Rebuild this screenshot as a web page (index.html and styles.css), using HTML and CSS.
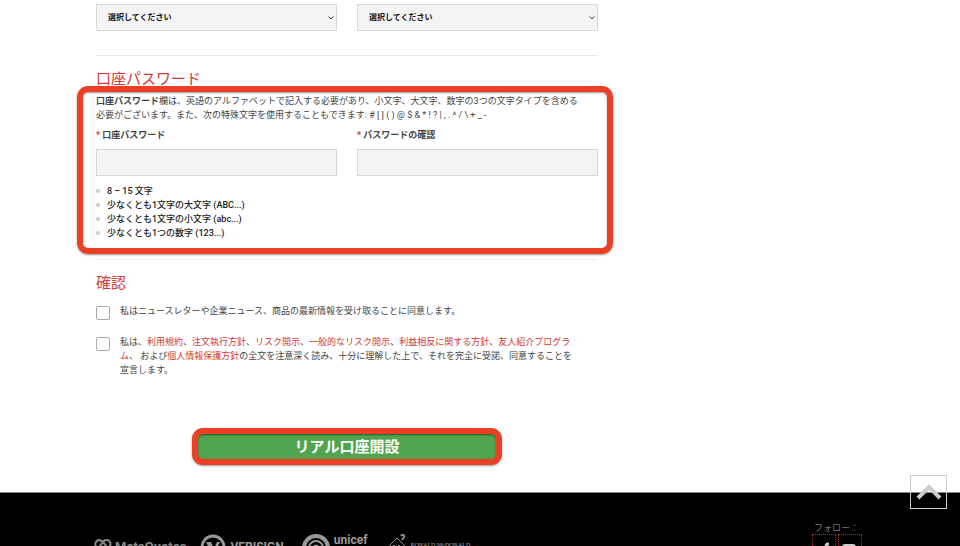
FILE: index.html
```html
<!DOCTYPE html>
<html lang="ja">
<head>
    <meta charset="UTF-8">
    <meta name="viewport" content="width=device-width, initial-scale=1.0">
    <title>リアル口座開設</title>
    <link rel="stylesheet" href="styles.css">
</head>
<body>

    <main class="container">
        <form class="account-form">
            <div class="row">
                <select class="field" aria-label="選択1">
                    <option>選択してください</option>
                </select>
                <select class="field" aria-label="選択2">
                    <option>選択してください</option>
                </select>
            </div>

            <!-- Account password -->
            <section class="section">
                <h2>口座パスワード</h2>
                <div class="password">
                    <p><strong>口座パスワード</strong>欄は、英語のアルファベットで記入する必要があり、小文字、大文字、数字の3つの文字タイプを含める<br>必要がございます。また、次の特殊文字を使用することもできます: # [ ] ( ) @ $ &amp; * ! ? | , . ^ / \ + _ -</p>
                    <div class="row">
                        <div class="group">
                            <label for="password"><span class="required">*</span> 口座パスワード</label>
                            <input class="field" type="password" id="password" name="password" required>
                        </div>
                        <div class="group">
                            <label for="confirm"><span class="required">*</span> パスワードの確認</label>
                            <input class="field" type="password" id="confirm" name="confirm" required>
                        </div>
                    </div>
                    <ul class="rules">
                        <li>8 – 15 文字</li>
                        <li>少なくとも1文字の大文字 (ABC...)</li>
                        <li>少なくとも1文字の小文字 (abc...)</li>
                        <li>少なくとも1つの数字 (123...)</li>
                    </ul>
                </div>
            </section>

            <!-- Confirmation -->
            <section class="section">
                <h2>確認</h2>
                <div class="checks">
                    <div class="check">
                        <input type="checkbox" id="newsletter" name="newsletter">
                        <label for="newsletter">私はニュースレターや企業ニュース、商品の最新情報を受け取ることに同意します。</label>
                    </div>
                    <div class="check">
                        <input type="checkbox" id="terms" name="terms" required>
                        <label for="terms">私は、<a href="#">利用規約</a>、<a href="#">注文執行方針</a>、<a href="#">リスク開示</a>、<a href="#">一般的なリスク開示</a>、<a href="#">利益相反に関する方針</a>、<a href="#">友人紹介プログラ<br>ム</a>、 および<a href="#">個人情報保護方針</a>の全文を注意深く読み、十分に理解した上で、それを完全に受諾、同意することを<br>宣言します。</label>
                    </div>
                </div>
            </section>

            <button class="submit" type="submit">リアル口座開設</button>
        </form>
    </main>

    <footer class="footer">
        <div class="partners">
            <div class="partner metaquotes">
                <svg width="18" height="18" viewBox="0 0 18 18" fill="none" stroke="#888" stroke-width="2">
                    <path d="M2 9C0 5 3 2 5 2c2 0 3 1 4 2l4 5M5 9l5-6c2-2 5-1 6 1 1 2 0 4-1 5l-6 7-7-7"/>
                </svg>
                <span>MetaQuotes</span>
            </div>
            <div class="partner verisign">
                <svg width="26" height="26" viewBox="0 0 26 26">
                    <circle cx="13" cy="13" r="11" fill="none" stroke="#999" stroke-width="3"/>
                    <path d="M6 8h5l3 7 3-7h3l-6 12h-2z" fill="#999"/>
                </svg>
                <span>VERISIGN</span>
            </div>
            <div class="partner unicef">
                <svg width="28" height="28" viewBox="0 0 28 28" fill="none" stroke="#999">
                    <circle cx="14" cy="14" r="12" stroke-width="4"/>
                    <circle cx="14" cy="14" r="7" stroke-width="2"/>
                    <circle cx="14" cy="14" r="3" fill="#999"/>
                </svg>
                <span>unicef<br>China</span>
            </div>
            <div class="partner ronald">
                <svg width="20" height="24" viewBox="0 0 20 24" fill="none" stroke="#888">
                    <path d="M1 13l9-9 9 9M3 12v10h14V12"/>
                    <path d="M14 2c1-2 4-1 3 1l-2 3M7 11v3M12 11v3" stroke-width="2"/>
                </svg>
                <span>RONALD McDONALD</span>
            </div>
        </div>
        <div class="follow">
            <span>フォロー：</span>
            <div class="social">
                <a href="#" aria-label="Facebook">
                    <svg width="20" height="20" viewBox="0 0 20 20">
                        <path d="M15 9h-1c-2 0-2 1-2 3v8M9 14h6" fill="none" stroke="#ccc" stroke-width="3"/>
                    </svg>
                </a>
                <a href="#" aria-label="YouTube">
                    <svg width="20" height="20" viewBox="0 0 20 20">
                        <path d="M5 9h8q3 0 3 3v4q0 3-3 3H5q-3 0-3-3v-4q0-3 3-3z" fill="#ccc"/>
                        <path d="M8 12l4 2-4 2z" fill="#000"/>
                    </svg>
                </a>
            </div>
        </div>
    </footer>

    <a class="to-top" href="#" aria-label="Top">
        <svg width="26" height="16" viewBox="0 0 26 16">
            <path d="M2 14L13 3l11 11" fill="none" stroke="#ccc" stroke-width="4"/>
        </svg>
    </a>

</body>
</html>
```
FILE: styles.css
```css
* {
    box-sizing: border-box;
}
body {
    display: flex;
    flex-direction: column;
    height: 100vh;
    margin: 0;
    overflow: hidden;
    background-color: #fff;
    color: #444;
    font-family: Roboto, "Noto Sans CJK JP", sans-serif;
    font-size: 9px;
    line-height: 14px;
}
.container {
    width: 100%;
    padding: 4px 96px 27px;
}
.account-form {
    max-width: 502px;
}
.row {
    display: grid;
    grid-template-columns: 1fr 1fr;
    gap: 20px;
}
.field {
    display: block;
    width: 100%;
    height: 27px;
    padding: 0 7px;
    border: 1px solid #d8d8d8;
    border-radius: 0;
    background-color: #f4f4f4;
    font-family: inherit;
    font-size: 9px;
}
select.field {
    appearance: none;
    padding: 0 11px;
    background-image: url("data:image/svg+xml,%3Csvg xmlns='http://www.w3.org/2000/svg' width='6' height='4'%3E%3Cpath d='M.5.5L3 3 5.500.5' fill='none' stroke='%23444'/%3E%3C/svg%3E");
    background-position: right 2px center;
    background-repeat: no-repeat;
    color: #111;
    font-size: 8px;
    font-weight: bold;
}
.section {
    margin-top: 24px;
    border-top: 1px solid #e8e8e8;
}
h2 {
    margin: 0;
    padding: 13px 0 5px;
    color: #d13a37;
    font-size: 15px;
    font-weight: normal;
    line-height: 20px;
}
p {
    margin: 0 0 6px;
}
/* Highlight frame drawn around the password fields */
.password {
    position: relative;
}
.password::after {
    content: "";
    position: absolute;
    inset: -8px -15px -14px -19px;
    border: 6px solid #eb4026;
    border-radius: 11px;
    box-shadow: 0 1px 2px rgba(0, 0, 0, 0.4), inset 0 1px 2px rgba(0, 0, 0, 0.4);
    pointer-events: none;
}
.group label {
    display: block;
    margin-bottom: 7px;
    font-weight: bold;
}
.required {
    color: #d13a37;
}
.rules {
    margin: 8px 0 0;
    padding: 0;
    color: #222;
    font-weight: 500;
    list-style: none;
}
.rules li {
    display: flex;
    align-items: center;
    gap: 7px;
}
.rules li::before {
    content: "";
    width: 4px;
    height: 4px;
    border-radius: 50%;
    background-color: #ccc;
}
.section + .section {
    margin-top: 19px;
}
.checks {
    display: grid;
    gap: 15px;
    padding-top: 6px;
}
.check {
    display: flex;
    align-items: flex-start;
    gap: 10px;
}
.check input {
    flex: none;
    appearance: none;
    width: 14px;
    height: 14px;
    margin: 2px 0 0;
    border: 1px solid #aaa;
    border-radius: 2px;
    background-color: #fff;
}
.check a {
    color: #d13a37;
    text-decoration: none;
}
.submit {
    display: block;
    width: 310px;
    height: 37px;
    margin: 51px auto 0;
    border: 6px solid #eb4026;
    border-radius: 11px;
    background-color: #52a550;
    box-shadow: 0 1px 2px rgba(0, 0, 0, 0.4), inset 0 1px 2px rgba(0, 0, 0, 0.5);
    color: #fff;
    font-family: inherit;
    font-size: 15px;
    font-weight: bold;
    line-height: 20px;
}
.footer {
    display: flex;
    flex: 1;
    justify-content: space-between;
    min-height: 0;
    padding: 29px 98px 0 94px;
    border-top: 1px solid #888;
    background-color: #000;
    color: #999;
    overflow: hidden;
}
.partners {
    display: flex;
    align-items: flex-start;
    gap: 14px;
    padding-top: 12px;
}
.partner {
    display: flex;
    gap: 4px;
    font-weight: bold;
    white-space: nowrap;
}
.metaquotes {
    gap: 3px;
    padding-top: 4px;
    color: #888;
    font-size: 13px;
    line-height: 18px;
}
.verisign {
    font-size: 12px;
    line-height: 26px;
}
.unicef {
    margin-left: 4px;
    font-size: 12px;
    line-height: 12px;
}
.ronald {
    gap: 3px;
    margin-left: 6px;
    color: #aaa;
    font-family: "Liberation Serif", serif;
    font-size: 6px;
    font-weight: normal;
    line-height: 22px;
}
.follow {
    color: #777;
}
.follow span {
    display: block;
    padding-left: 2px;
    line-height: 12px;
}
.social {
    display: flex;
    gap: 2px;
}
.social a {
    display: flex;
    padding: 0 1px;
    border: 1px dotted #b22;
}
.to-top {
    position: fixed;
    right: 13px;
    bottom: 37px;
    display: flex;
    align-items: center;
    justify-content: center;
    width: 37px;
    height: 34px;
    border: 1px solid #ccc;
}
```
